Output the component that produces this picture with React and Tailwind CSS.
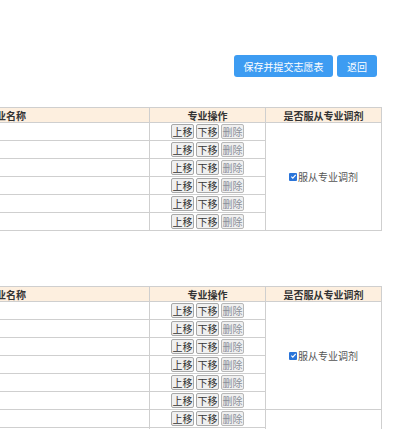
import React from "react";

const font = { fontFamily: '"Noto Sans CJK SC", "Noto Sans", sans-serif' };

function RowButtons() {
  return (
    <div className="flex items-center justify-center gap-[2px]">
      <button className="w-[23px] h-[15px] whitespace-nowrap border border-[#a8a8a8] bg-[#f0f0f0] rounded-[2px] text-[10px] leading-[13px] text-[#333] p-0">上移</button>
      <button className="w-[23px] h-[15px] whitespace-nowrap border border-[#a8a8a8] bg-[#f0f0f0] rounded-[2px] text-[10px] leading-[13px] text-[#333] p-0">下移</button>
      <button className="w-[23px] h-[15px] whitespace-nowrap border border-[#b8b8b8] bg-[#f0f0f0] rounded-[2px] text-[10px] leading-[13px] text-[#8a8f99] p-0">删除</button>
    </div>
  );
}

function Check() {
  return (
    <div className="flex items-center justify-center gap-[1px] text-[10px] text-[#555]">
      <span className="inline-flex items-center justify-center w-[8px] h-[8px] rounded-[1px] bg-[#2a74d9]">
        <svg width="7" height="7" viewBox="0 0 8 8">
          <path d="M1.5 4.2 L3.2 5.8 L6.5 2.2" fill="none" stroke="#fff" strokeWidth="1.4" />
        </svg>
      </span>
      <span>服从专业调剂</span>
    </div>
  );
}

function Table({ groups }) {
  const rows = [];
  groups.forEach((g, gi) => {
    for (let i = 0; i < g; i++) {
      rows.push(
        <tr key={gi + "-" + i} className="h-[18px]">
          <td className="border border-[#cfcfcf] p-0"></td>
          <td className="border border-[#cfcfcf] p-0">
            <RowButtons />
          </td>
          {i === 0 && (
            <td rowSpan={g} className="border border-[#cfcfcf] p-0 align-middle">
              {gi === 0 && <Check />}
            </td>
          )}
        </tr>
      );
    }
  });
  return (
    <table className="table-fixed border-collapse ml-[-25px] w-[406px]">
      <colgroup>
        <col className="w-[174px]" />
        <col className="w-[116px]" />
        <col className="w-[116px]" />
      </colgroup>
      <thead>
        <tr className="h-[15px] bg-[#fdefdf]">
          <th className="border border-[#cfcfcf] p-0 pl-[10px] text-left text-[10px] font-bold text-[#333] leading-[13px]">专业名称</th>
          <th className="border border-[#cfcfcf] p-0 text-center text-[10px] font-bold text-[#333] leading-[13px]">专业操作</th>
          <th className="border border-[#cfcfcf] p-0 text-center text-[10px] font-bold text-[#333] leading-[13px]">是否服从专业调剂</th>
        </tr>
      </thead>
      <tbody>{rows}</tbody>
    </table>
  );
}

export default function App() {
  return (
    <div className="w-[400px] h-[429px] overflow-hidden bg-white" style={font}>
      <div className="flex justify-end gap-[4px] pt-[55px] pr-[23px]">
        <button className="w-[99px] h-[22px] rounded-[3px] bg-[#3d9cf2] text-white text-[10px]">保存并提交志愿表</button>
        <button className="w-[40px] h-[22px] rounded-[3px] bg-[#3d9cf2] text-white text-[10px]">返回</button>
      </div>
      <div className="mt-[30px]">
        <Table groups={[6]} />
      </div>
      <div className="mt-[55px]">
        <Table groups={[6, 6]} />
      </div>
    </div>
  );
}
